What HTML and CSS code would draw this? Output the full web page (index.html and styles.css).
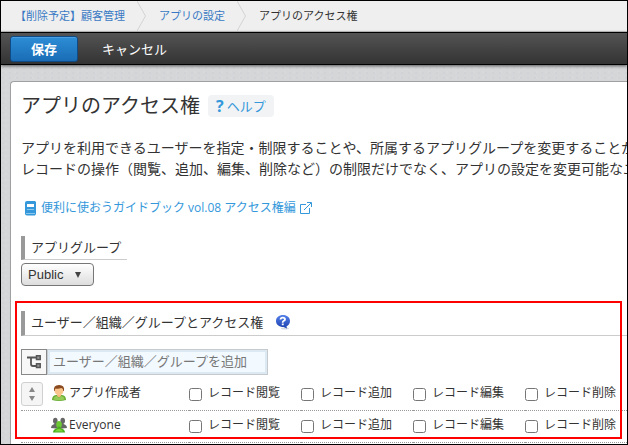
FILE: index.html
```html
<!DOCTYPE html>
<html lang="ja">

<head>
  <meta charset="UTF-8" />
  <meta name="viewport" content="width=device-width, initial-scale=1.0" />
  <title>アプリのアクセス権</title>
  <link rel="stylesheet" href="styles.css">
</head>

<body>
  <nav class="breadcrumb">
    <a href="#">【削除予定】顧客管理</a>
    <svg class="crumb-arrow" width="10" height="30" viewBox="0 0 10 30"><path d="M0 0L8.500 15L0 30" /></svg>
    <a href="#">アプリの設定</a>
    <svg class="crumb-arrow" width="10" height="30" viewBox="0 0 10 30"><path d="M0 0L8.500 15L0 30" /></svg>
    <span>アプリのアクセス権</span>
  </nav>

  <div class="toolbar">
    <button type="button" class="save-btn">保存</button>
    <button type="button" class="cancel-btn">キャンセル</button>
  </div>

  <main class="content">
    <div class="panel">
      <div class="title-row">
        <h1>アプリのアクセス権</h1>
        <a href="#" class="help-link"><span class="help-mark">?</span>ヘルプ</a>
      </div>

      <p class="description">アプリを利用できるユーザーを指定・制限することや、所属するアプリグループを変更することが<br>レコードの操作（閲覧、追加、編集、削除など）の制限だけでなく、アプリの設定を変更可能なユ</p>

      <a href="#" class="guide-link">
        <svg width="12" height="15" viewBox="0 0 12 15">
          <path fill="#3498db" d="M2 0H10L11 1V13L10 14.500H2Q0 14.500 0 12.500V2Q0 0 2 0Z" />
          <path fill="#fff" d="M2 3H9V6H2Z" />
          <path fill="#8cc8ee" d="M2 8H9V9H2ZM1 12H10V13H1Z" />
        </svg>
        <span>便利に使おうガイドブック vol.08 アクセス権編</span>
        <svg width="12" height="12" viewBox="0 0 12 12" fill="none" stroke="#3498db">
          <path d="M6 2.500H.5V11.500H9.500V6M4 8L11 1M7 .5H11.500V5" />
        </svg>
      </a>

      <section>
        <h2 class="section-title group-title"><label for="app-group">アプリグループ</label></h2>
        <div class="select-wrap">
          <select id="app-group">
            <option>Public</option>
          </select>
        </div>
      </section>

      <section class="rights">
        <h2 class="section-title">
          <label for="add-user">ユーザー／組織／グループとアクセス権</label>
          <svg width="16" height="16" viewBox="0 0 16 16">
            <defs>
              <linearGradient id="bubble" x1="0" y1="0" x2="0" y2="1">
                <stop offset="0" stop-color="#5580ea" />
                <stop offset="1" stop-color="#1b3fae" />
              </linearGradient>
            </defs>
            <ellipse cx="10" cy="14.500" rx="4" ry="1" fill="#d5d9e2" />
            <path fill="url(#bubble)" d="M8 1C12 1 15 3.500 15 7C15 9.500 13.500 11.500 11.500 12.300L12 14.500L8.500 13C4 13 1 10.500 1 7C1 3.500 4 1 8 1Z" />
            <path fill="none" stroke="#fff" stroke-width="1.800" d="M5.500 5.500Q5.700 3.700 7.700 3.700Q10 3.700 10 5.500Q10 6.500 8.500 7Q7.700 7.400 7.700 8.700" />
            <path fill="#fff" d="M6.800 9.500H8.700V11.200H6.800Z" />
          </svg>
        </h2>

        <div class="add-row">
          <button type="button" class="tree-btn" aria-label="組織から選択">
            <svg width="16" height="16" viewBox="0 0 16 16" fill="none" stroke="#555">
              <path stroke-width="1.800" d="M1 3.500H10M5 3.500V10Q5 12 7 12H10" />
              <path fill="#999" stroke-width="1.500" d="M10.500 1.800H14.200V5.500H10.500ZM10.500 9.800H14.200V13.500H10.500Z" />
            </svg>
          </button>
          <input type="text" id="add-user" placeholder="ユーザー／組織／グループを追加" />
        </div>

        <table class="rights-table">
          <tbody>
            <tr>
              <td class="sort-cell">
                <button type="button" class="sort-btn" aria-label="並べ替え">
                  <svg width="8" height="14" viewBox="0 0 8 14" fill="#888"><path d="M4 0L7 5H1ZM1 9H7L4 14Z" /></svg>
                </button>
              </td>
              <th scope="row" class="name-cell">
                <div class="entity">
                  <svg width="16" height="18" viewBox="0 0 16 18">
                    <path fill="#6aad35" d="M1 16Q1 11.500 5 11H11Q15 11.500 15 16Q8 18 1 16Z" />
                    <path fill="#95cc58" d="M2.500 15.500Q2.500 12.500 6 12L8 14L10 12Q13.500 12.500 13.500 15.500Q8 17 2.500 15.500Z" />
                    <path fill="#f6b679" d="M6 9H10V12L8 13.500L6 12Z" />
                    <ellipse cx="8" cy="6.500" rx="4.500" ry="5" fill="#fac58c" />
                    <path fill="#8a4a20" d="M3 7Q2 1 8 1Q14 1 13 7L12.300 7Q12.300 4.500 10.500 4Q7 5.300 4.500 4.500Q3.700 5.500 3.700 7Z" />
                  </svg>
                  <span>アプリ作成者</span>
                </div>
              </th>
              <td><label><input type="checkbox" />レコード閲覧</label></td>
              <td><label><input type="checkbox" />レコード追加</label></td>
              <td><label><input type="checkbox" />レコード編集</label></td>
              <td class="last-cell"><label><input type="checkbox" />レコード削除</label></td>
            </tr>
            <tr>
              <td class="sort-cell"></td>
              <th scope="row" class="name-cell">
                <div class="entity">
                  <svg width="16" height="18" viewBox="0 0 16 18">
                    <g fill="#666">
                      <ellipse cx="4.300" cy="4.800" rx="2.300" ry="3" />
                      <ellipse cx="11.700" cy="4.800" rx="2.300" ry="3" />
                      <path d="M0 12Q0 9 3.500 8V7H5.500L8 9L10.500 7H12.500V8Q16 9 16 12L11 12.500H5Z" />
                    </g>
                    <ellipse cx="8" cy="8.500" rx="2.800" ry="3.500" fill="#6cc832" />
                    <path fill="#4bad20" d="M2 16.500Q2 13 6.500 12L7 10.500H9L9.500 12Q14 13 14 16.500Z" />
                    <path fill="#7cd43e" d="M4 15.500Q4 14 7 13H9Q12 14 12 15.500Z" />
                  </svg>
                  <span>Everyone</span>
                </div>
              </th>
              <td><label><input type="checkbox" />レコード閲覧</label></td>
              <td><label><input type="checkbox" />レコード追加</label></td>
              <td><label><input type="checkbox" />レコード編集</label></td>
              <td class="last-cell"><label><input type="checkbox" />レコード削除</label></td>
            </tr>
          </tbody>
        </table>

        <div class="highlight"></div>
      </section>
    </div>
  </main>
</body>

</html>
```
FILE: styles.css
```css
/* Base Styles */
* {
  box-sizing: border-box;
  margin: 0;
  padding: 0;
}

body {
  font-family: "Open Sans", "Noto Sans CJK JP", sans-serif;
  font-size: 12px;
  line-height: 20px;
  color: #333;
  min-height: 100vh;
  display: flex;
  flex-direction: column;
  border: 1px solid #000;
  overflow: hidden;
}

button,
input,
select {
  font-family: inherit;
  color: inherit;
}

a {
  color: #3879c4;
  text-decoration: none;
}

svg {
  flex: none;
}

h1,
h2,
th {
  font-weight: normal;
}

/* Breadcrumb */
.breadcrumb {
  display: flex;
  align-items: center;
  height: 31px;
  padding-left: 14px;
  background-color: #efefef;
  border-bottom: 1px solid #c4c4c4;
  font-size: 11px;
  white-space: nowrap;
}

.crumb-arrow {
  margin: 0 12px;
  fill: none;
  stroke: #d3d3d3;
}

/* Toolbar */
.toolbar {
  position: relative;
  display: flex;
  align-items: center;
  height: 33px;
  padding-left: 9px;
  gap: 24px;
  background: linear-gradient(#545454, #333);
  border-top: 1px solid #000;
  border-bottom: 1px solid #000;
  box-shadow: 0 1px 3px rgba(0, 0, 0, 0.6);
}

.save-btn {
  width: 68px;
  height: 26px;
  background: linear-gradient(#2c8dd6, #1a6db5);
  border: 1px solid #104a86;
  border-radius: 3px;
  box-shadow: inset 0 1px 0 #4aa0df;
  color: #fff;
  font-size: 13px;
  font-weight: bold;
}

.cancel-btn {
  background: none;
  border: none;
  color: #fff;
  font-size: 13px;
}

/* Main panel */
.content {
  flex: 1;
  display: flex;
  padding: 16px 0 0 9px;
  background-color: #d4d6d8;
  background-image:
    radial-gradient(circle at 2px 3px, #d0d2d5 1px, transparent 1px),
    radial-gradient(circle at 5px 1px, #d7d9da 1px, transparent 1px);
  background-size: 7px 5px, 9px 6px;
}

.panel {
  flex: 1;
  min-width: 0;
  padding: 13px 0 0 10px;
  background-color: #fff;
  border-top: 1px solid #a0a0a0;
  border-left: 1px solid #a0a0a0;
  border-top-left-radius: 4px;
}

.title-row {
  display: flex;
  align-items: center;
  gap: 8px;
}

h1 {
  font-size: 20px;
  line-height: 22px;
}

.help-link {
  display: flex;
  align-items: center;
  gap: 3px;
  height: 22px;
  padding: 0 8px;
  background-color: #f1f3f5;
  border-radius: 4px;
  color: #3498db;
  font-size: 13px;
}

.help-mark {
  font-size: 16px;
  font-weight: bold;
}

.description {
  margin-top: 20px;
  font-size: 14px;
  line-height: 21px;
  white-space: nowrap;
  overflow: hidden;
}

.guide-link {
  display: flex;
  align-items: center;
  gap: 4px;
  margin-top: 19px;
  padding-left: 4px;
  color: #3498db;
}

/* Sections */
.section-title {
  display: flex;
  align-items: center;
  gap: 12px;
  height: 25px;
  padding-left: 6px;
  padding-bottom: 2px;
  border-left: 4px solid #999;
  border-bottom: 1px solid #ccc;
  font-size: 13px;
}

.group-title {
  width: fit-content;
  height: 24px;
  margin-top: 18px;
  padding-right: 6px;
}

.select-wrap {
  position: relative;
  width: 73px;
  margin-top: 3px;
}

.select-wrap::after {
  content: "";
  position: absolute;
  top: 9px;
  right: 13px;
  border: 3px solid transparent;
  border-top: 6px solid #444;
  border-bottom: none;
  pointer-events: none;
}

.select-wrap select {
  display: block;
  appearance: none;
  width: 100%;
  height: 23px;
  padding-left: 6px;
  background: linear-gradient(#fff, #ddd);
  border: 1px solid #777;
  border-radius: 4px;
  font-family: "Liberation Sans", Arial, sans-serif;
  font-size: 13px;
}

.rights {
  position: relative;
  margin-top: 25px;
}

.add-row {
  display: flex;
  margin-top: 13px;
}

.tree-btn {
  display: flex;
  align-items: center;
  justify-content: center;
  width: 26px;
  height: 26px;
  background-color: #f7f7f7;
  border: 1px solid #888;
}

.add-row input {
  width: 221px;
  height: 26px;
  padding: 0 5px 2px;
  background-color: #f2f9ff;
  border: 1px solid #c4cace;
  box-shadow: inset 0 0 0 2px #dce9f2;
  font-size: 13px;
}

.add-row input::placeholder {
  color: #777;
}

/* Access rights */
.rights-table {
  width: 100%;
  margin-top: 4px;
  table-layout: fixed;
  border-collapse: separate;
  border-spacing: 0;
  white-space: nowrap;
}

.rights-table td,
.rights-table th {
  width: 112px;
  height: 32px;
  padding-bottom: 4px;
  border-bottom: 1px dotted #999;
  text-align: left;
  vertical-align: middle;
}

.rights-table .sort-cell {
  width: 30px;
  padding-bottom: 2px;
}

.rights-table .name-cell {
  width: 138px;
}

.rights-table .last-cell {
  width: auto;
}

.sort-btn {
  display: flex;
  align-items: center;
  justify-content: center;
  width: 22px;
  height: 24px;
  background-color: #f5f5f5;
  border: 1px solid #d0d0d0;
  border-radius: 3px;
}

.entity {
  display: flex;
  align-items: center;
  gap: 2px;
}

.rights-table label {
  display: flex;
  align-items: center;
  gap: 6px;
}

.rights-table input {
  width: 13px;
  height: 13px;
  margin-top: 3px;
}

/* Frame around the access rights area */
.highlight {
  position: absolute;
  top: -10px;
  right: 5px;
  bottom: 4px;
  left: -6px;
  border: 2px solid #f00;
  pointer-events: none;
}
```
